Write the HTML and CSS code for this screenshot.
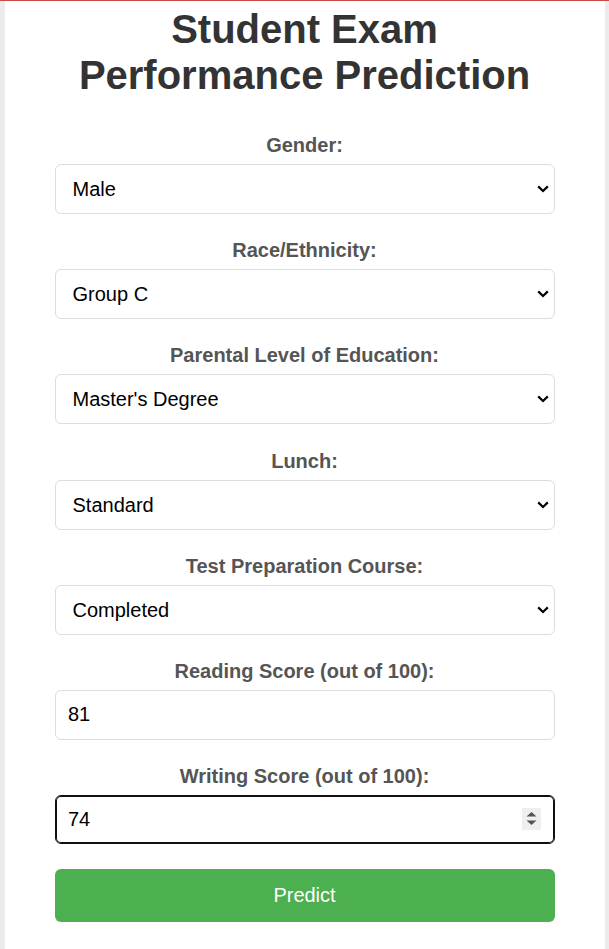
FILE: index.html
```html
<!DOCTYPE html>
<html lang="en">
<head>
<meta charset="utf-8">
<title>Student Exam Performance Prediction</title>
<link rel="stylesheet" href="styles.css">
</head>
<body>
<div class="container">
  <h1 class="title">Student Exam Performance Prediction</h1>
  <form class="form">
    <div class="group">
      <label class="label" for="gender">Gender:</label>
      <div class="select-wrap">
        <select class="field select" id="gender"><option>Male</option><option>Female</option></select>
        <svg class="chevron" width="12" height="8" viewBox="0 0 12 8"><path d="M1.2 1.4 L6 6 L10.8 1.4" fill="none" stroke="#000" stroke-width="2.2"/></svg>
      </div>
    </div>
    <div class="group">
      <label class="label" for="race">Race/Ethnicity:</label>
      <div class="select-wrap">
        <select class="field select" id="race"><option>Group C</option></select>
        <svg class="chevron" width="12" height="8" viewBox="0 0 12 8"><path d="M1.2 1.4 L6 6 L10.8 1.4" fill="none" stroke="#000" stroke-width="2.2"/></svg>
      </div>
    </div>
    <div class="group">
      <label class="label" for="edu">Parental Level of Education:</label>
      <div class="select-wrap">
        <select class="field select" id="edu"><option>Master's Degree</option></select>
        <svg class="chevron" width="12" height="8" viewBox="0 0 12 8"><path d="M1.2 1.4 L6 6 L10.8 1.4" fill="none" stroke="#000" stroke-width="2.2"/></svg>
      </div>
    </div>
    <div class="group">
      <label class="label" for="lunch">Lunch:</label>
      <div class="select-wrap">
        <select class="field select" id="lunch"><option>Standard</option></select>
        <svg class="chevron" width="12" height="8" viewBox="0 0 12 8"><path d="M1.2 1.4 L6 6 L10.8 1.4" fill="none" stroke="#000" stroke-width="2.2"/></svg>
      </div>
    </div>
    <div class="group">
      <label class="label" for="prep">Test Preparation Course:</label>
      <div class="select-wrap">
        <select class="field select" id="prep"><option>Completed</option></select>
        <svg class="chevron" width="12" height="8" viewBox="0 0 12 8"><path d="M1.2 1.4 L6 6 L10.8 1.4" fill="none" stroke="#000" stroke-width="2.2"/></svg>
      </div>
    </div>
    <div class="group">
      <label class="label" for="reading">Reading Score (out of 100):</label>
      <input class="field input" id="reading" type="text" value="81">
    </div>
    <div class="group">
      <label class="label" for="writing">Writing Score (out of 100):</label>
      <div class="input-wrap">
        <input class="field input focused" id="writing" type="text" value="74">
        <span class="spinner">
          <svg width="19" height="22" viewBox="0 0 19 22"><path d="M4.5 8.5 L9.5 4 L14.5 8.5 Z" fill="#555"/><path d="M4.5 12.5 L9.5 17 L14.5 12.5 Z" fill="#555"/></svg>
        </span>
      </div>
    </div>
    <button class="btn" type="button">Predict</button>
  </form>
</div>
</body>
</html>
```
FILE: styles.css
```css
html, body {
  margin: 0;
  padding: 0;
}
body {
  background: #ebebeb;
  border-top: 1px solid #c94b4b;
  font-family: "Liberation Sans", Arial, sans-serif;
}
.container {
  width: 600px;
  margin: 0 auto;
  background: #fff;
  box-sizing: border-box;
  padding: 5px 50px 27px;
}
.title {
  margin: 0 0 36px;
  font-size: 40px;
  font-weight: bold;
  color: #333;
  text-align: center;
  line-height: 46px;
}
.form {
  display: flex;
  flex-direction: column;
}
.group {
  display: flex;
  flex-direction: column;
  margin-bottom: 25.2px;
}
.label {
  display: block;
  text-align: center;
  font-size: 20px;
  font-weight: bold;
  color: #555;
  line-height: 23px;
  margin-bottom: 7px;
}
.field {
  display: block;
  width: 100%;
  box-sizing: border-box;
  height: 50px;
  padding: 12.5px 14px;
  font-family: "Liberation Sans", Arial, sans-serif;
  font-size: 20px;
  color: #000;
  background: #fff;
  border: 1px solid #ddd;
  border-radius: 6px;
  margin: 0;
}
.select-wrap {
  position: relative;
}
.select {
  -webkit-appearance: none;
  appearance: none;
  padding-left: 17px;
  padding-right: 30px;
}
.chevron {
  position: absolute;
  right: 6px;
  top: 21px;
  pointer-events: none;
}
.input {
  padding-left: 12.5px;
}
.input-wrap {
  position: relative;
}
.focused {
  border-color: #101010;
  box-shadow: inset 0 0 0 1px #101010;
  height: 49px;
  outline: none;
}
.spinner {
  position: absolute;
  left: 467px;
  top: 13px;
  width: 19px;
  height: 22px;
  background: #efefef;
  display: block;
}
.spinner svg {
  display: block;
}
.btn {
  display: block;
  width: 100%;
  height: 53px;
  border: none;
  border-radius: 6px;
  background: #4caf50;
  color: #fff;
  font-family: "Liberation Sans", Arial, sans-serif;
  font-size: 20px;
  cursor: pointer;
}
```
